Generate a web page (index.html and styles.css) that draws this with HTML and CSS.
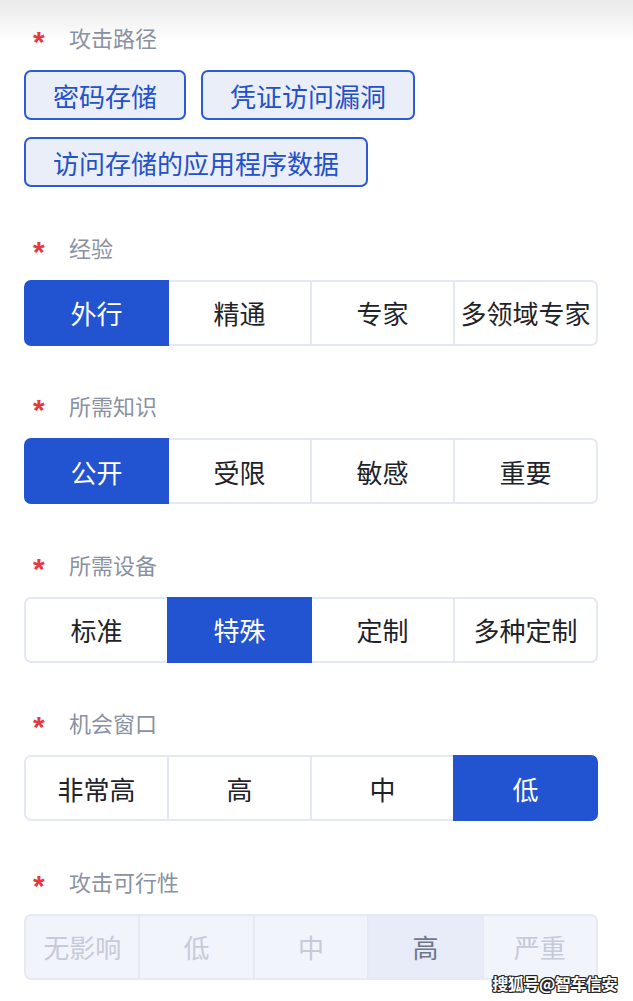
FILE: index.html
```html
<!DOCTYPE html>
<html lang="zh-CN">
<head>
<meta charset="utf-8">
<title>攻击可行性</title>
<link rel="stylesheet" href="styles.css">
</head>
<body>
<div class="page">
  <section class="field">
    <div class="label"><span class="req">*</span><span class="label-text">攻击路径</span></div>
    <div class="tags">
      <span class="tag">密码存储</span>
      <span class="tag">凭证访问漏洞</span>
      <span class="tag">访问存储的应用程序数据</span>
    </div>
  </section>
  <section class="field">
    <div class="label"><span class="req">*</span><span class="label-text">经验</span></div>
    <div class="seg">
      <div class="seg-item is-on">外行</div>
      <div class="seg-item">精通</div>
      <div class="seg-item">专家</div>
      <div class="seg-item">多领域专家</div>
    </div>
  </section>
  <section class="field">
    <div class="label"><span class="req">*</span><span class="label-text">所需知识</span></div>
    <div class="seg">
      <div class="seg-item is-on">公开</div>
      <div class="seg-item">受限</div>
      <div class="seg-item">敏感</div>
      <div class="seg-item">重要</div>
    </div>
  </section>
  <section class="field">
    <div class="label"><span class="req">*</span><span class="label-text">所需设备</span></div>
    <div class="seg">
      <div class="seg-item">标准</div>
      <div class="seg-item is-on">特殊</div>
      <div class="seg-item">定制</div>
      <div class="seg-item">多种定制</div>
    </div>
  </section>
  <section class="field">
    <div class="label"><span class="req">*</span><span class="label-text">机会窗口</span></div>
    <div class="seg">
      <div class="seg-item">非常高</div>
      <div class="seg-item">高</div>
      <div class="seg-item">中</div>
      <div class="seg-item is-on">低</div>
    </div>
  </section>
  <section class="field">
    <div class="label"><span class="req">*</span><span class="label-text">攻击可行性</span></div>
    <div class="seg seg-disabled">
      <div class="seg-item">无影响</div>
      <div class="seg-item">低</div>
      <div class="seg-item">中</div>
      <div class="seg-item is-on">高</div>
      <div class="seg-item">严重</div>
    </div>
  </section>
</div>
<div class="watermark">搜狐号@智车信安</div>
</body>
</html>
```
FILE: styles.css
```css
html, body {
  margin: 0;
  padding: 0;
}
body {
  width: 633px;
  height: 1001px;
  overflow: hidden;
  position: relative;
  background: linear-gradient(#e9e9e9 0px, #ffffff 42px) no-repeat, #ffffff;
  font-family: "Noto Sans CJK SC", "Noto Sans", sans-serif;
}
.page {
  padding: 24px 35px 0 24px;
  display: flex;
  flex-direction: column;
  gap: 46.5px;
}
.field {
  display: flex;
  flex-direction: column;
  gap: 16px;
}
.label {
  display: flex;
  align-items: center;
  height: 30px;
  box-sizing: border-box;
  padding: 0 0 4px 9px;
}
.req {
  width: 36px;
  height: 30px;
  box-sizing: border-box;
  padding-top: 5px;
  font-family: "Liberation Sans", sans-serif;
  font-weight: bold;
  font-size: 30px;
  line-height: 30px;
  color: #e8383d;
}
.label-text {
  font-size: 22px;
  line-height: 30px;
  color: #8a91a2;
}
.tags {
  display: flex;
  flex-wrap: wrap;
  column-gap: 15px;
  row-gap: 17px;
}
.tag {
  height: 50px;
  box-sizing: border-box;
  padding: 0 27px;
  border: 2px solid #2d5bd6;
  border-radius: 7px;
  background: #e9eef9;
  color: #2450c9;
  font-size: 26px;
  display: flex;
  align-items: center;
}
.seg {
  display: flex;
  height: 66px;
}
.seg-item {
  flex: 1;
  display: flex;
  align-items: center;
  justify-content: center;
  border: 2px solid #e4e8f2;
  margin-left: -2px;
  font-size: 26px;
  color: #1f2329;
  background: #ffffff;
  position: relative;
}
.seg-item:first-child {
  margin-left: 0;
  border-radius: 7px 0 0 7px;
}
.seg-item:last-child {
  border-radius: 0 7px 7px 0;
}
.seg-item.is-on {
  background: #2253d1;
  border-color: #2253d1;
  color: #ffffff;
  z-index: 1;
}
.seg-disabled .seg-item {
  background: #f1f4fa;
  border-color: #e6eaf3;
  color: #c6cbd7;
}
.seg-disabled .seg-item.is-on {
  background: #e7ecf8;
  border-color: #e6eaf3;
  color: #6f778b;
  z-index: 0;
}
.watermark {
  position: absolute;
  right: 16px;
  bottom: 6px;
  font-size: 16.2px;
  line-height: 24px;
  font-weight: bold;
  color: #ffffff;
  letter-spacing: -0.6px;
  text-shadow: -1px -1px 0 #222, 1px -1px 0 #222, -1px 1px 0 #222, 1px 1px 0 #222, 0 1px 0 #222, 0 -1px 0 #222, 1px 0 0 #222, -1px 0 0 #222;
}
```
